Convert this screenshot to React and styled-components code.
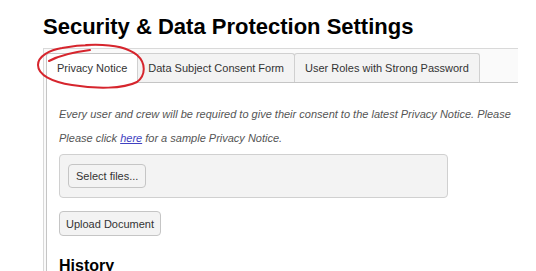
import React from "react";
import styled, { createGlobalStyle } from "styled-components";

const GlobalStyle = createGlobalStyle`
  html, body { margin: 0; padding: 0; background: #fff; overflow: hidden; }
  body { font-family: Arial, "Liberation Sans", sans-serif; }
`;

const Page = styled.div`
  position: relative;
  height: 271px;
  overflow: hidden;
  padding: 14px 0 0 43px;
  box-sizing: border-box;
`;

const Title = styled.h1`
  margin: 0 0 8px 0;
  font-size: 22px;
  line-height: 26px;
  font-weight: bold;
  color: #000;
`;

const Clip = styled.div`
  width: 475px;
  overflow: hidden;
`;

const TabStrip = styled.div`
  width: 700px;
  border: 1px solid #d9d9d9;
  background: #fafafa;
  padding: 4px 2px 0 2px;
  box-sizing: border-box;
`;

const TabList = styled.div`
  display: flex;
  align-items: flex-end;
  height: 29px;
  position: relative;
  z-index: 1;
`;

const Tab = styled.div`
  height: ${(p) => (p.$active ? "30px" : "29px")};
  margin-bottom: ${(p) => (p.$active ? "-1px" : "0")};
  margin-right: -1px;
  padding: 0 10px;
  box-sizing: border-box;
  display: flex;
  align-items: center;
  font-size: 11px;
  color: #333;
  white-space: nowrap;
  border: 1px solid ${(p) => (p.$active ? "#c5c5c5" : "#d0d0d0")};
  border-bottom: none;
  border-radius: 3px 3px 0 0;
  background: ${(p) => (p.$active ? "#fff" : "#f3f3f3")};
  padding-bottom: ${(p) => (p.$active ? "1px" : "0")};
`;

const TabContent = styled.div`
  border: 1px solid #c5c5c5;
  background: #fff;
  padding: 23px 12px 0 12px;
  min-height: 260px;
`;

const Note = styled.p`
  margin: 0 0 8px 0;
  font-size: 11px;
  line-height: 16px;
  font-style: italic;
  color: #555;
  white-space: nowrap;
`;

const Link = styled.a`
  color: #4141c1;
  text-decoration: underline;
`;

const UploadBox = styled.div`
  display: flex;
  align-items: center;
  width: 389px;
  height: 44px;
  box-sizing: border-box;
  border: 1px solid #d0d0d0;
  border-radius: 4px;
  background: #f3f3f3;
  padding: 0 8px;
  margin-top: 8px;
`;

const Button = styled.button`
  display: inline-flex;
  align-items: center;
  height: ${(p) => p.$h || 24}px;
  padding: 0 ${(p) => p.$px || 7}px;
  box-sizing: border-box;
  font-family: Arial, "Liberation Sans", sans-serif;
  font-size: 11px;
  color: #333;
  background: #f3f3f3;
  border: 1px solid #c5c5c5;
  border-radius: 4px;
`;

const Actions = styled.div`
  display: flex;
  margin-top: 13px;
`;

const SectionTitle = styled.h3`
  margin: 21px 0 0 0;
  font-size: 16px;
  line-height: 18px;
  font-weight: bold;
  color: #000;
`;

const Annotation = styled.svg`
  position: absolute;
  left: 0;
  top: 0;
  pointer-events: none;
  z-index: 5;
`;

export default function App() {
  return (
    <>
      <GlobalStyle />
      <Page>
        <Title>Security &amp; Data Protection Settings</Title>
        <Clip>
          <TabStrip>
            <TabList>
              <Tab $active>Privacy Notice</Tab>
              <Tab>Data Subject Consent Form</Tab>
              <Tab>User Roles with Strong Password</Tab>
            </TabList>
            <TabContent>
              <Note>
                Every user and crew will be required to give their consent to the latest Privacy Notice. Please
              </Note>
              <Note>
                Please click <Link href="#">here</Link> for a sample Privacy Notice.
              </Note>
              <UploadBox>
                <Button>Select files...</Button>
              </UploadBox>
              <Actions>
                <Button $h={25} $px={6}>Upload Document</Button>
              </Actions>
              <SectionTitle>History</SectionTitle>
            </TabContent>
          </TabStrip>
        </Clip>
        <Annotation width="536" height="110" viewBox="0 0 536 110">
          <path
            d="M 86 45 C 105 44, 126 46, 137 55 C 146 63, 146 75, 137 82 C 123 89, 96 89, 72 85 C 52 82, 38 75, 38 65 C 38 56, 50 50, 62 48 C 72 46, 80 45, 92 45"
            fill="none"
            stroke="#d6252d"
            strokeWidth="2"
            strokeLinecap="round"
          />
          <path
            d="M 49 61 C 60 55, 74 52, 90 50"
            fill="none"
            stroke="#d6252d"
            strokeWidth="2"
            strokeLinecap="round"
          />
        </Annotation>
      </Page>
    </>
  );
}
